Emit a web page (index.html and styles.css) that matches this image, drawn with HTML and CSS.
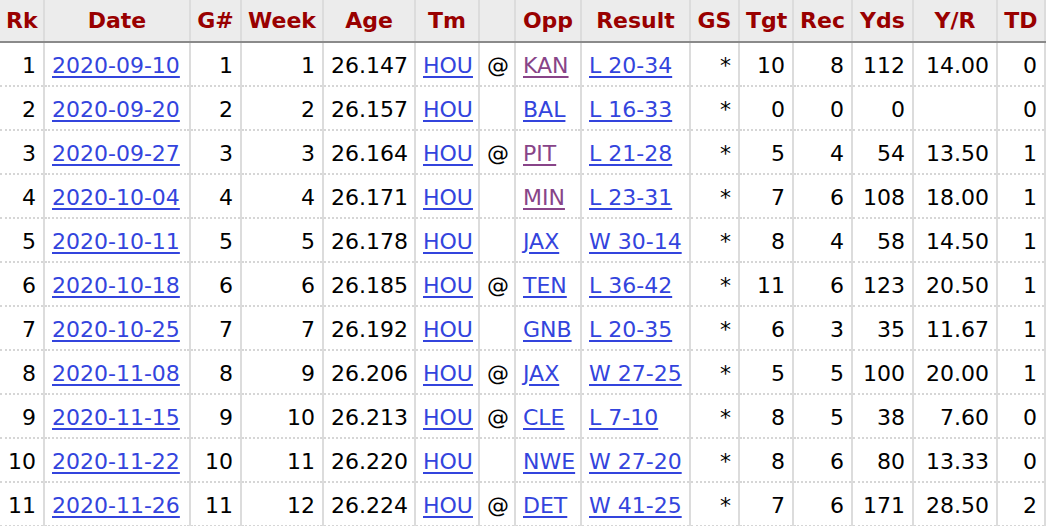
FILE: index.html
```html
<!DOCTYPE html>
<html>
<head>
<meta charset="utf-8">
<link rel="stylesheet" href="styles.css">
</head>
<body>
<table class="stats">
<colgroup>
<col class="c-rk"><col class="c-date"><col class="c-g"><col class="c-week"><col class="c-age"><col class="c-tm"><col class="c-at"><col class="c-opp"><col class="c-res"><col class="c-gs"><col class="c-tgt"><col class="c-rec"><col class="c-yds"><col class="c-yr"><col class="c-td">
</colgroup>
<thead>
<tr><th>Rk</th><th>Date</th><th>G#</th><th>Week</th><th>Age</th><th>Tm</th><th></th><th>Opp</th><th>Result</th><th>GS</th><th>Tgt</th><th>Rec</th><th>Yds</th><th>Y/R</th><th>TD</th></tr>
</thead>
<tbody>
<tr><td class="r">1</td><td><a href="#">2020-09-10</a></td><td class="r">1</td><td class="r">1</td><td class="r">26.147</td><td><a href="#">HOU</a></td><td class="c">@</td><td><a class="v" href="#">KAN</a></td><td><a href="#">L 20-34</a></td><td class="r">*</td><td class="r">10</td><td class="r">8</td><td class="r">112</td><td class="r">14.00</td><td class="r">0</td></tr>
<tr><td class="r">2</td><td><a href="#">2020-09-20</a></td><td class="r">2</td><td class="r">2</td><td class="r">26.157</td><td><a href="#">HOU</a></td><td class="c"></td><td><a href="#">BAL</a></td><td><a href="#">L 16-33</a></td><td class="r">*</td><td class="r">0</td><td class="r">0</td><td class="r">0</td><td class="r"></td><td class="r">0</td></tr>
<tr><td class="r">3</td><td><a href="#">2020-09-27</a></td><td class="r">3</td><td class="r">3</td><td class="r">26.164</td><td><a href="#">HOU</a></td><td class="c">@</td><td><a class="v" href="#">PIT</a></td><td><a href="#">L 21-28</a></td><td class="r">*</td><td class="r">5</td><td class="r">4</td><td class="r">54</td><td class="r">13.50</td><td class="r">1</td></tr>
<tr><td class="r">4</td><td><a href="#">2020-10-04</a></td><td class="r">4</td><td class="r">4</td><td class="r">26.171</td><td><a href="#">HOU</a></td><td class="c"></td><td><a class="v" href="#">MIN</a></td><td><a href="#">L 23-31</a></td><td class="r">*</td><td class="r">7</td><td class="r">6</td><td class="r">108</td><td class="r">18.00</td><td class="r">1</td></tr>
<tr><td class="r">5</td><td><a href="#">2020-10-11</a></td><td class="r">5</td><td class="r">5</td><td class="r">26.178</td><td><a href="#">HOU</a></td><td class="c"></td><td><a href="#">JAX</a></td><td><a href="#">W 30-14</a></td><td class="r">*</td><td class="r">8</td><td class="r">4</td><td class="r">58</td><td class="r">14.50</td><td class="r">1</td></tr>
<tr><td class="r">6</td><td><a href="#">2020-10-18</a></td><td class="r">6</td><td class="r">6</td><td class="r">26.185</td><td><a href="#">HOU</a></td><td class="c">@</td><td><a href="#">TEN</a></td><td><a href="#">L 36-42</a></td><td class="r">*</td><td class="r">11</td><td class="r">6</td><td class="r">123</td><td class="r">20.50</td><td class="r">1</td></tr>
<tr><td class="r">7</td><td><a href="#">2020-10-25</a></td><td class="r">7</td><td class="r">7</td><td class="r">26.192</td><td><a href="#">HOU</a></td><td class="c"></td><td><a href="#">GNB</a></td><td><a href="#">L 20-35</a></td><td class="r">*</td><td class="r">6</td><td class="r">3</td><td class="r">35</td><td class="r">11.67</td><td class="r">1</td></tr>
<tr><td class="r">8</td><td><a href="#">2020-11-08</a></td><td class="r">8</td><td class="r">9</td><td class="r">26.206</td><td><a href="#">HOU</a></td><td class="c">@</td><td><a href="#">JAX</a></td><td><a href="#">W 27-25</a></td><td class="r">*</td><td class="r">5</td><td class="r">5</td><td class="r">100</td><td class="r">20.00</td><td class="r">1</td></tr>
<tr><td class="r">9</td><td><a href="#">2020-11-15</a></td><td class="r">9</td><td class="r">10</td><td class="r">26.213</td><td><a href="#">HOU</a></td><td class="c">@</td><td><a href="#">CLE</a></td><td><a href="#">L 7-10</a></td><td class="r">*</td><td class="r">8</td><td class="r">5</td><td class="r">38</td><td class="r">7.60</td><td class="r">0</td></tr>
<tr><td class="r">10</td><td><a href="#">2020-11-22</a></td><td class="r">10</td><td class="r">11</td><td class="r">26.220</td><td><a href="#">HOU</a></td><td class="c"></td><td><a href="#">NWE</a></td><td><a href="#">W 27-20</a></td><td class="r">*</td><td class="r">8</td><td class="r">6</td><td class="r">80</td><td class="r">13.33</td><td class="r">0</td></tr>
<tr><td class="r">11</td><td><a href="#">2020-11-26</a></td><td class="r">11</td><td class="r">12</td><td class="r">26.224</td><td><a href="#">HOU</a></td><td class="c">@</td><td><a href="#">DET</a></td><td><a href="#">W 41-25</a></td><td class="r">*</td><td class="r">7</td><td class="r">6</td><td class="r">171</td><td class="r">28.50</td><td class="r">2</td></tr>
</tbody>
</table>
</body>
</html>
```
FILE: styles.css
```css
html, body {
  margin: 0;
  padding: 0;
  background: #fff;
}
body {
  font-family: "DejaVu Sans", Verdana, sans-serif;
  font-size: 22px;
  color: #000;
}
.stats {
  border-collapse: collapse;
  table-layout: fixed;
  width: 1045px;
}
.c-rk { width: 44px; }
.c-date { width: 146px; }
.c-g { width: 51px; }
.c-week { width: 82px; }
.c-age { width: 92px; }
.c-tm { width: 64px; }
.c-at { width: 36px; }
.c-opp { width: 66px; }
.c-res { width: 109px; }
.c-gs { width: 49px; }
.c-tgt { width: 54px; }
.c-rec { width: 59px; }
.c-yds { width: 61px; }
.c-yr { width: 84px; }
.c-td { width: 48px; }
.stats th {
  background: #ececec;
  color: #990000;
  font-weight: bold;
  height: 41px;
  padding: 0 6px;
  text-align: center;
  white-space: nowrap;
  border-left: 2px solid #dcdcdc;
  border-right: 2px solid #dcdcdc;
  border-bottom: 2px solid #8a8a8a;
}
.stats td {
  height: 40px;
  padding: 2px 7px 0;
  white-space: nowrap;
  border-left: 2px solid #dcdcdc;
  border-right: 2px solid #dcdcdc;
  border-bottom: 2px dotted #d6d6d6;
}
.stats th:first-child,
.stats td:first-child {
  border-left: none;
}
.stats td.r { text-align: right; }
.stats td.c { text-align: center; }
.stats a {
  color: #3344dd;
  text-decoration: underline;
  text-underline-offset: 3px;
}
.stats a.v {
  color: #884488;
}
```
